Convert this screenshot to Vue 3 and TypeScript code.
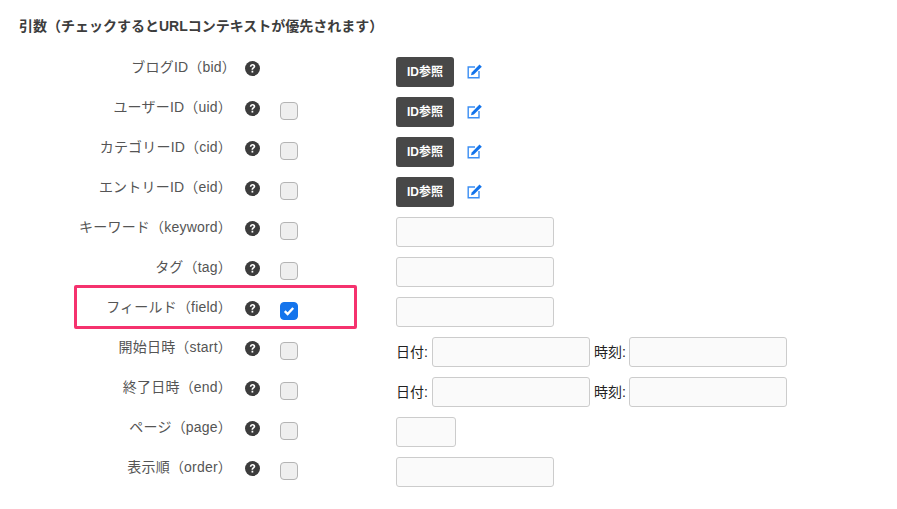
<script setup lang="ts">
type Row = { label: string; check: boolean; checked?: boolean; kind: 'ref' | 'text' | 'date' | 'small' }
const rows: Row[] = [
  { label: 'ブログID（bid）', check: false, kind: 'ref' },
  { label: 'ユーザーID（uid）', check: true, kind: 'ref' },
  { label: 'カテゴリーID（cid）', check: true, kind: 'ref' },
  { label: 'エントリーID（eid）', check: true, kind: 'ref' },
  { label: 'キーワード（keyword）', check: true, kind: 'text' },
  { label: 'タグ（tag）', check: true, kind: 'text' },
  { label: 'フィールド（field）', check: true, checked: true, kind: 'text' },
  { label: '開始日時（start）', check: true, kind: 'date' },
  { label: '終了日時（end）', check: true, kind: 'date' },
  { label: 'ページ（page）', check: true, kind: 'small' },
  { label: '表示順（order）', check: true, kind: 'text' },
]
</script>

<template>
  <div class="page">
    <h2 class="title">引数（チェックするとURLコンテキストが優先されます）</h2>
    <div class="rows">
      <div v-for="r in rows" :key="r.label" class="row">
        <div class="label">{{ r.label }}</div>
        <div class="help">
          <svg class="helpicon" width="15" height="15" viewBox="0 0 14 14">
            <circle cx="7" cy="7" r="7" fill="#3c3c3c" />
            <path d="M4.5 5.3C4.6 3.8 5.7 2.9 7.1 2.9c1.5 0 2.5.9 2.5 2.1 0 1-.6 1.5-1.2 1.9-.6.4-.8.6-.8 1.3H6.1c0-1.1.3-1.6 1-2.1.6-.4.9-.6.9-1.1 0-.5-.4-.8-.9-.8-.6 0-1 .4-1.1 1.1Z" fill="#fff" />
            <rect x="6.1" y="9.1" width="1.6" height="1.7" fill="#fff" />
          </svg>
        </div>
        <div class="checkcell">
          <span v-if="r.check" class="box" :class="{ on: r.checked }">
            <svg v-if="r.checked" class="tick" width="12" height="10" viewBox="0 0 12 10">
              <path d="M1.8 5.2 4.6 8l5.6-6" fill="none" stroke="#fff" stroke-width="2.4" />
            </svg>
          </span>
        </div>
        <div class="field">
          <template v-if="r.kind === 'ref'">
            <button class="refbtn">ID参照</button>
            <svg class="edit" width="15" height="15" viewBox="0 0 15 15">
              <path d="M8 3H1.2v10.8H12V7" fill="none" stroke="#3b8ef3" stroke-width="1.4" />
              <path d="M4 11.2l.7-2.8L12.5.5l2.3 2.3-8 7.7Z" fill="#1273eb" />
            </svg>
          </template>
          <div v-else-if="r.kind === 'text'" class="input w158"></div>
          <div v-else-if="r.kind === 'small'" class="input w60"></div>
          <template v-else>
            <span class="dt first">日付:</span>
            <div class="input w158"></div>
            <span class="dt second">時刻:</span>
            <div class="input w158"></div>
          </template>
        </div>
      </div>
      <div class="highlight"></div>
    </div>
  </div>
</template>

<style>
body { margin: 0; background: #fff; }
</style>

<style scoped>
.page {
  width: 897px;
  height: 509px;
  overflow: hidden;
  font-family: "Liberation Sans", "Noto Sans CJK JP", sans-serif;
  color: #444;
  background: #fff;
}
.title {
  margin: 0;
  padding: 16px 0 0 19px;
  font-size: 14px;
  line-height: 20px;
  font-weight: 700;
  color: #3d3d3d;
  white-space: nowrap;
}
.rows {
  position: relative;
  margin-top: 21px;
}
.row {
  display: flex;
  height: 40px;
}
.label {
  width: 232px;
  text-align: right;
  font-size: 14px;
  line-height: 20px;
  letter-spacing: 0.2px;
  color: #555;
  white-space: nowrap;
}
.row:first-child .label {
  transform: translateX(4px);
}
.help {
  width: 48px;
  padding: 4px 0 0 13px;
  box-sizing: border-box;
}
.helpicon { display: block; }
.checkcell {
  width: 116px;
  padding-top: 5px;
  box-sizing: border-box;
}
.box {
  display: block;
  width: 18px;
  height: 18px;
  box-sizing: border-box;
  border: 1px solid #b4b4b4;
  border-radius: 4px;
  background: #efefef;
}
.box.on {
  display: flex;
  align-items: center;
  justify-content: center;
  background: #1474ec;
  border-color: #1474ec;
}
.tick { display: block; }
.field {
  display: flex;
  align-items: flex-start;
}
.refbtn {
  width: 58px;
  height: 30px;
  padding: 0;
  border: 0;
  border-radius: 3px;
  background: #484848;
  color: #fff;
  font: 700 12px/30px "Liberation Sans", "Noto Sans CJK JP", sans-serif;
}
.edit {
  margin: 7px 0 0 13px;
}
.input {
  height: 30px;
  box-sizing: border-box;
  border: 1px solid #ccc;
  border-radius: 3px;
  background: #fafafa;
}
.w158 { width: 158px; }
.w60 { width: 60px; }
.dt {
  font-size: 14px;
  line-height: 30px;
  color: #222;
  white-space: nowrap;
}
.first { margin: 0 4px 0 0; }
.second { margin: 0 3px 0 4px; }
.highlight {
  position: absolute;
  left: 74px;
  top: 228px;
  width: 283px;
  height: 44px;
  box-sizing: border-box;
  border: 3px solid #f5326e;
  border-radius: 2px;
  pointer-events: none;
}
</style>
